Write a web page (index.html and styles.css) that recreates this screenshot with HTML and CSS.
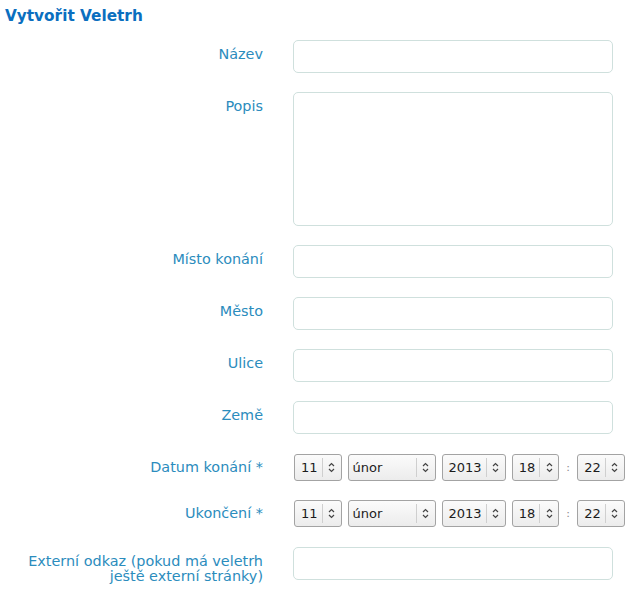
FILE: index.html
```html
<!DOCTYPE html>
<html lang="cs">
<head>
<meta charset="utf-8">
<title>Vytvořit Veletrh</title>
<link rel="stylesheet" href="styles.css">
</head>
<body>
<div class="page">
  <h1 class="title">Vytvořit Veletrh</h1>
  <form class="form">
    <div class="row">
      <label class="lbl">Název</label>
      <div class="ctl"><input class="field" type="text"></div>
    </div>
    <div class="row">
      <label class="lbl">Popis</label>
      <div class="ctl"><textarea class="field area"></textarea></div>
    </div>
    <div class="row">
      <label class="lbl">Místo konání</label>
      <div class="ctl"><input class="field" type="text"></div>
    </div>
    <div class="row">
      <label class="lbl">Město</label>
      <div class="ctl"><input class="field" type="text"></div>
    </div>
    <div class="row">
      <label class="lbl">Ulice</label>
      <div class="ctl"><input class="field" type="text"></div>
    </div>
    <div class="row">
      <label class="lbl">Země</label>
      <div class="ctl"><input class="field" type="text"></div>
    </div>
    <div class="dt-group">
      <div class="row">
        <label class="lbl lbl-dt">Datum konání *</label>
        <div class="ctl dt">
          <span class="sel"><span class="sel-val">11</span><span class="sel-arr"><svg width="7" height="11" viewBox="0 0 7 11"><path d="M1 4 L3.5 1.5 L6 4 M1 7 L3.5 9.5 L6 7" fill="none" stroke="#444" stroke-width="1.2"/></svg></span></span>
          <span class="sel sel-month"><span class="sel-val">únor</span><span class="sel-arr"><svg width="7" height="11" viewBox="0 0 7 11"><path d="M1 4 L3.5 1.5 L6 4 M1 7 L3.5 9.5 L6 7" fill="none" stroke="#444" stroke-width="1.2"/></svg></span></span>
          <span class="sel"><span class="sel-val">2013</span><span class="sel-arr"><svg width="7" height="11" viewBox="0 0 7 11"><path d="M1 4 L3.5 1.5 L6 4 M1 7 L3.5 9.5 L6 7" fill="none" stroke="#444" stroke-width="1.2"/></svg></span></span>
          <span class="sel"><span class="sel-val">18</span><span class="sel-arr"><svg width="7" height="11" viewBox="0 0 7 11"><path d="M1 4 L3.5 1.5 L6 4 M1 7 L3.5 9.5 L6 7" fill="none" stroke="#444" stroke-width="1.2"/></svg></span></span>
          <span class="colon">:</span>
          <span class="sel"><span class="sel-val">22</span><span class="sel-arr"><svg width="7" height="11" viewBox="0 0 7 11"><path d="M1 4 L3.5 1.5 L6 4 M1 7 L3.5 9.5 L6 7" fill="none" stroke="#444" stroke-width="1.2"/></svg></span></span>
        </div>
      </div>
      <div class="row">
        <label class="lbl lbl-dt">Ukončení *</label>
        <div class="ctl dt">
          <span class="sel"><span class="sel-val">11</span><span class="sel-arr"><svg width="7" height="11" viewBox="0 0 7 11"><path d="M1 4 L3.5 1.5 L6 4 M1 7 L3.5 9.5 L6 7" fill="none" stroke="#444" stroke-width="1.2"/></svg></span></span>
          <span class="sel sel-month"><span class="sel-val">únor</span><span class="sel-arr"><svg width="7" height="11" viewBox="0 0 7 11"><path d="M1 4 L3.5 1.5 L6 4 M1 7 L3.5 9.5 L6 7" fill="none" stroke="#444" stroke-width="1.2"/></svg></span></span>
          <span class="sel"><span class="sel-val">2013</span><span class="sel-arr"><svg width="7" height="11" viewBox="0 0 7 11"><path d="M1 4 L3.5 1.5 L6 4 M1 7 L3.5 9.5 L6 7" fill="none" stroke="#444" stroke-width="1.2"/></svg></span></span>
          <span class="sel"><span class="sel-val">18</span><span class="sel-arr"><svg width="7" height="11" viewBox="0 0 7 11"><path d="M1 4 L3.5 1.5 L6 4 M1 7 L3.5 9.5 L6 7" fill="none" stroke="#444" stroke-width="1.2"/></svg></span></span>
          <span class="colon">:</span>
          <span class="sel"><span class="sel-val">22</span><span class="sel-arr"><svg width="7" height="11" viewBox="0 0 7 11"><path d="M1 4 L3.5 1.5 L6 4 M1 7 L3.5 9.5 L6 7" fill="none" stroke="#444" stroke-width="1.2"/></svg></span></span>
        </div>
      </div>
    </div>
    <div class="row">
      <label class="lbl">Externí odkaz (pokud má veletrh<br>ještě externí stránky)</label>
      <div class="ctl"><input class="field" type="text"></div>
    </div>
  </form>
</div>
</body>
</html>
```
FILE: styles.css
```css
html, body {
  margin: 0;
  padding: 0;
  background: #ffffff;
}

body {
  font-family: "DejaVu Sans", Verdana, sans-serif;
}

.page {
  padding: 0 5px;
}

.title {
  margin: 7px 0 15px;
  font-size: 15.3px;
  line-height: 18px;
  font-weight: bold;
  color: #0b6fbf;
}

.form {
  display: flex;
  flex-direction: column;
  gap: 19px;
}

.dt-group {
  display: flex;
  flex-direction: column;
  gap: 19px;
  padding: 1px 0;
}

.row {
  display: grid;
  grid-template-columns: 258px 320px;
  column-gap: 30px;
  align-items: start;
}

.lbl {
  text-align: right;
  font-size: 14.4px;
  line-height: 15px;
  padding-top: 7px;
  color: #2b8cbd;
}

.lbl-dt {
  padding-top: 6px;
}

.ctl {
  display: flex;
}

.field {
  box-sizing: border-box;
  width: 320px;
  height: 33px;
  margin: 0;
  padding: 4px 8px;
  border: 1px solid #cfe0dd;
  border-radius: 5px;
  background: #ffffff;
  font-family: "DejaVu Sans", sans-serif;
  font-size: 13px;
  outline: none;
}

.area {
  height: 134px;
  resize: none;
  display: block;
}

.dt {
  align-items: center;
  gap: 6px;
  padding-left: 1px;
}

.sel {
  box-sizing: border-box;
  flex-shrink: 0;
  display: inline-flex;
  align-items: stretch;
  height: 27px;
  border: 1px solid #a3a3a3;
  border-radius: 3px;
  background: linear-gradient(#fbfbfb, #ececec);
  font-size: 13px;
  color: #1c1c1c;
}

.sel-val {
  display: flex;
  align-items: center;
  padding: 0 4px 0 6px;
}

.sel-month {
  width: 88px;
}

.sel-month .sel-val {
  flex: 1;
  padding-left: 4px;
}

.sel-arr {
  width: 18px;
  display: flex;
  align-items: center;
  justify-content: center;
  margin: 3px 0;
  border-left: 1px solid #cfcfcf;
}

.colon {
  flex-shrink: 0;
  width: 6px;
  text-align: center;
  font-size: 11px;
  color: #8a8a8a;
}
```
